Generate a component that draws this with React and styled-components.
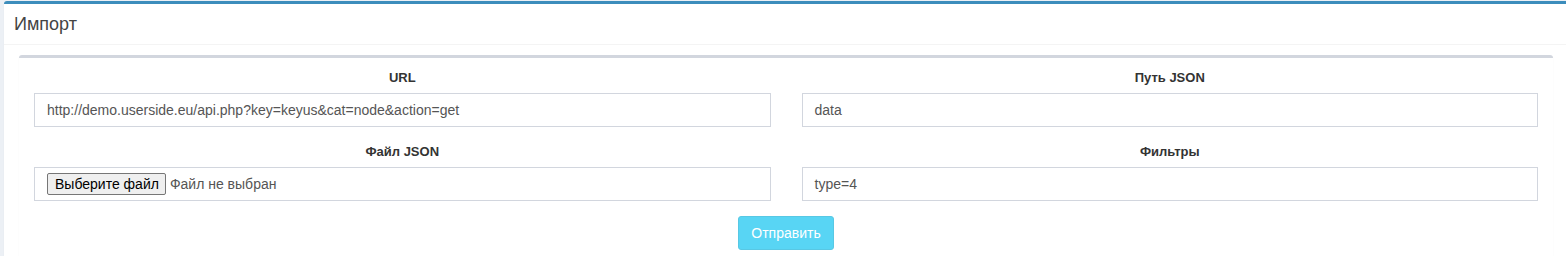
import React from 'react'
import styled, { createGlobalStyle } from 'styled-components'

const GlobalStyle = createGlobalStyle`
    html, body {
        margin: 0;
        padding: 0;
        background: #ecf0f5;
        font-family: "Liberation Sans", Arial, sans-serif;
        font-size: 14px;
        color: #333;
    }
    * {
        box-sizing: border-box;
    }
`

const Page = styled.div`
    padding: 1px 0 0 4px;
    overflow: hidden;
`

const Box = styled.section`
    background: #fff;
    border-top: 3px solid ${props => props.accent || '#3c8dbc'};
    border-radius: 3px 0 0 0;
    box-shadow: 0 1px 1px rgba(0,0,0,0.1);
`

const BoxHeader = styled.div`
    padding: 10px;
    border-bottom: 1px solid #f4f4f4;
`

const Title = styled.h3`
    margin: 0;
    font-size: 18px;
    line-height: 20px;
    font-weight: normal;
    color: #444;
`

const BoxBody = styled.div`
    padding: 10px 13px 10px 15px;
`

const InnerBox = styled.div`
    background: #fff;
    border-top: 3px solid #d2d6de;
    border-radius: 3px 3px 0 0;
    box-shadow: 0 1px 1px rgba(0,0,0,0.1);
    padding: 10px 15px 6px;
`

const Grid = styled.div`
    display: grid;
    grid-template-columns: 1fr 1fr;
    column-gap: 31px;
`

const Group = styled.div`
    margin-bottom: 15px;
`

const Label = styled.label`
    display: block;
    text-align: center;
    font-weight: bold;
    font-size: 13px;
    line-height: 20px;
    margin-bottom: 5px;
    color: #333;
`

const Field = styled.div`
    height: 34px;
    border: 1px solid #d2d6de;
    background: #fff;
    padding: 0 12px;
    display: flex;
    align-items: center;
    font-size: 14px;
    color: #555;
    white-space: nowrap;
    overflow: hidden;
`

const FileButton = styled.span`
    display: inline-flex;
    align-items: center;
    height: 22px;
    padding: 0 6px 0 7px;
    margin-right: 4px;
    background: #efefef;
    border: 1px solid #767676;
    border-radius: 2px;
    color: #000;
    font-size: 14px;
`

const Actions = styled.div`
    display: flex;
    justify-content: center;
`

const SubmitButton = styled.button`
    height: 34px;
    width: 96px;
    border: 1px solid #00acd6;
    border-radius: 3px;
    background: #00c0ef;
    color: #fff;
    font-family: inherit;
    font-size: 14px;
    opacity: 0.65;
    cursor: not-allowed;
    box-shadow: none;
`

const fields = [
    { label: 'URL', value: 'http://demo.userside.eu/api.php?key=keyus&cat=node&action=get' },
    { label: 'Путь JSON', value: 'data' },
    { label: 'Файл JSON', file: true },
    { label: 'Фильтры', value: 'type=4' },
]

const App = () => (
    <Page>
        <GlobalStyle />
        <Box>
            <BoxHeader>
                <Title>Импорт</Title>
            </BoxHeader>
            <BoxBody>
                <InnerBox>
                    <Grid>
                        {fields.map(f => (
                            <Group key={f.label}>
                                <Label>{f.label}</Label>
                                {f.file ? (
                                    <Field>
                                        <FileButton>Выберите файл</FileButton>
                                        Файл не выбран
                                    </Field>
                                ) : (
                                    <Field>{f.value}</Field>
                                )}
                            </Group>
                        ))}
                    </Grid>
                    <Actions>
                        <SubmitButton disabled>Отправить</SubmitButton>
                    </Actions>
                </InnerBox>
            </BoxBody>
        </Box>
    </Page>
)

export default App
